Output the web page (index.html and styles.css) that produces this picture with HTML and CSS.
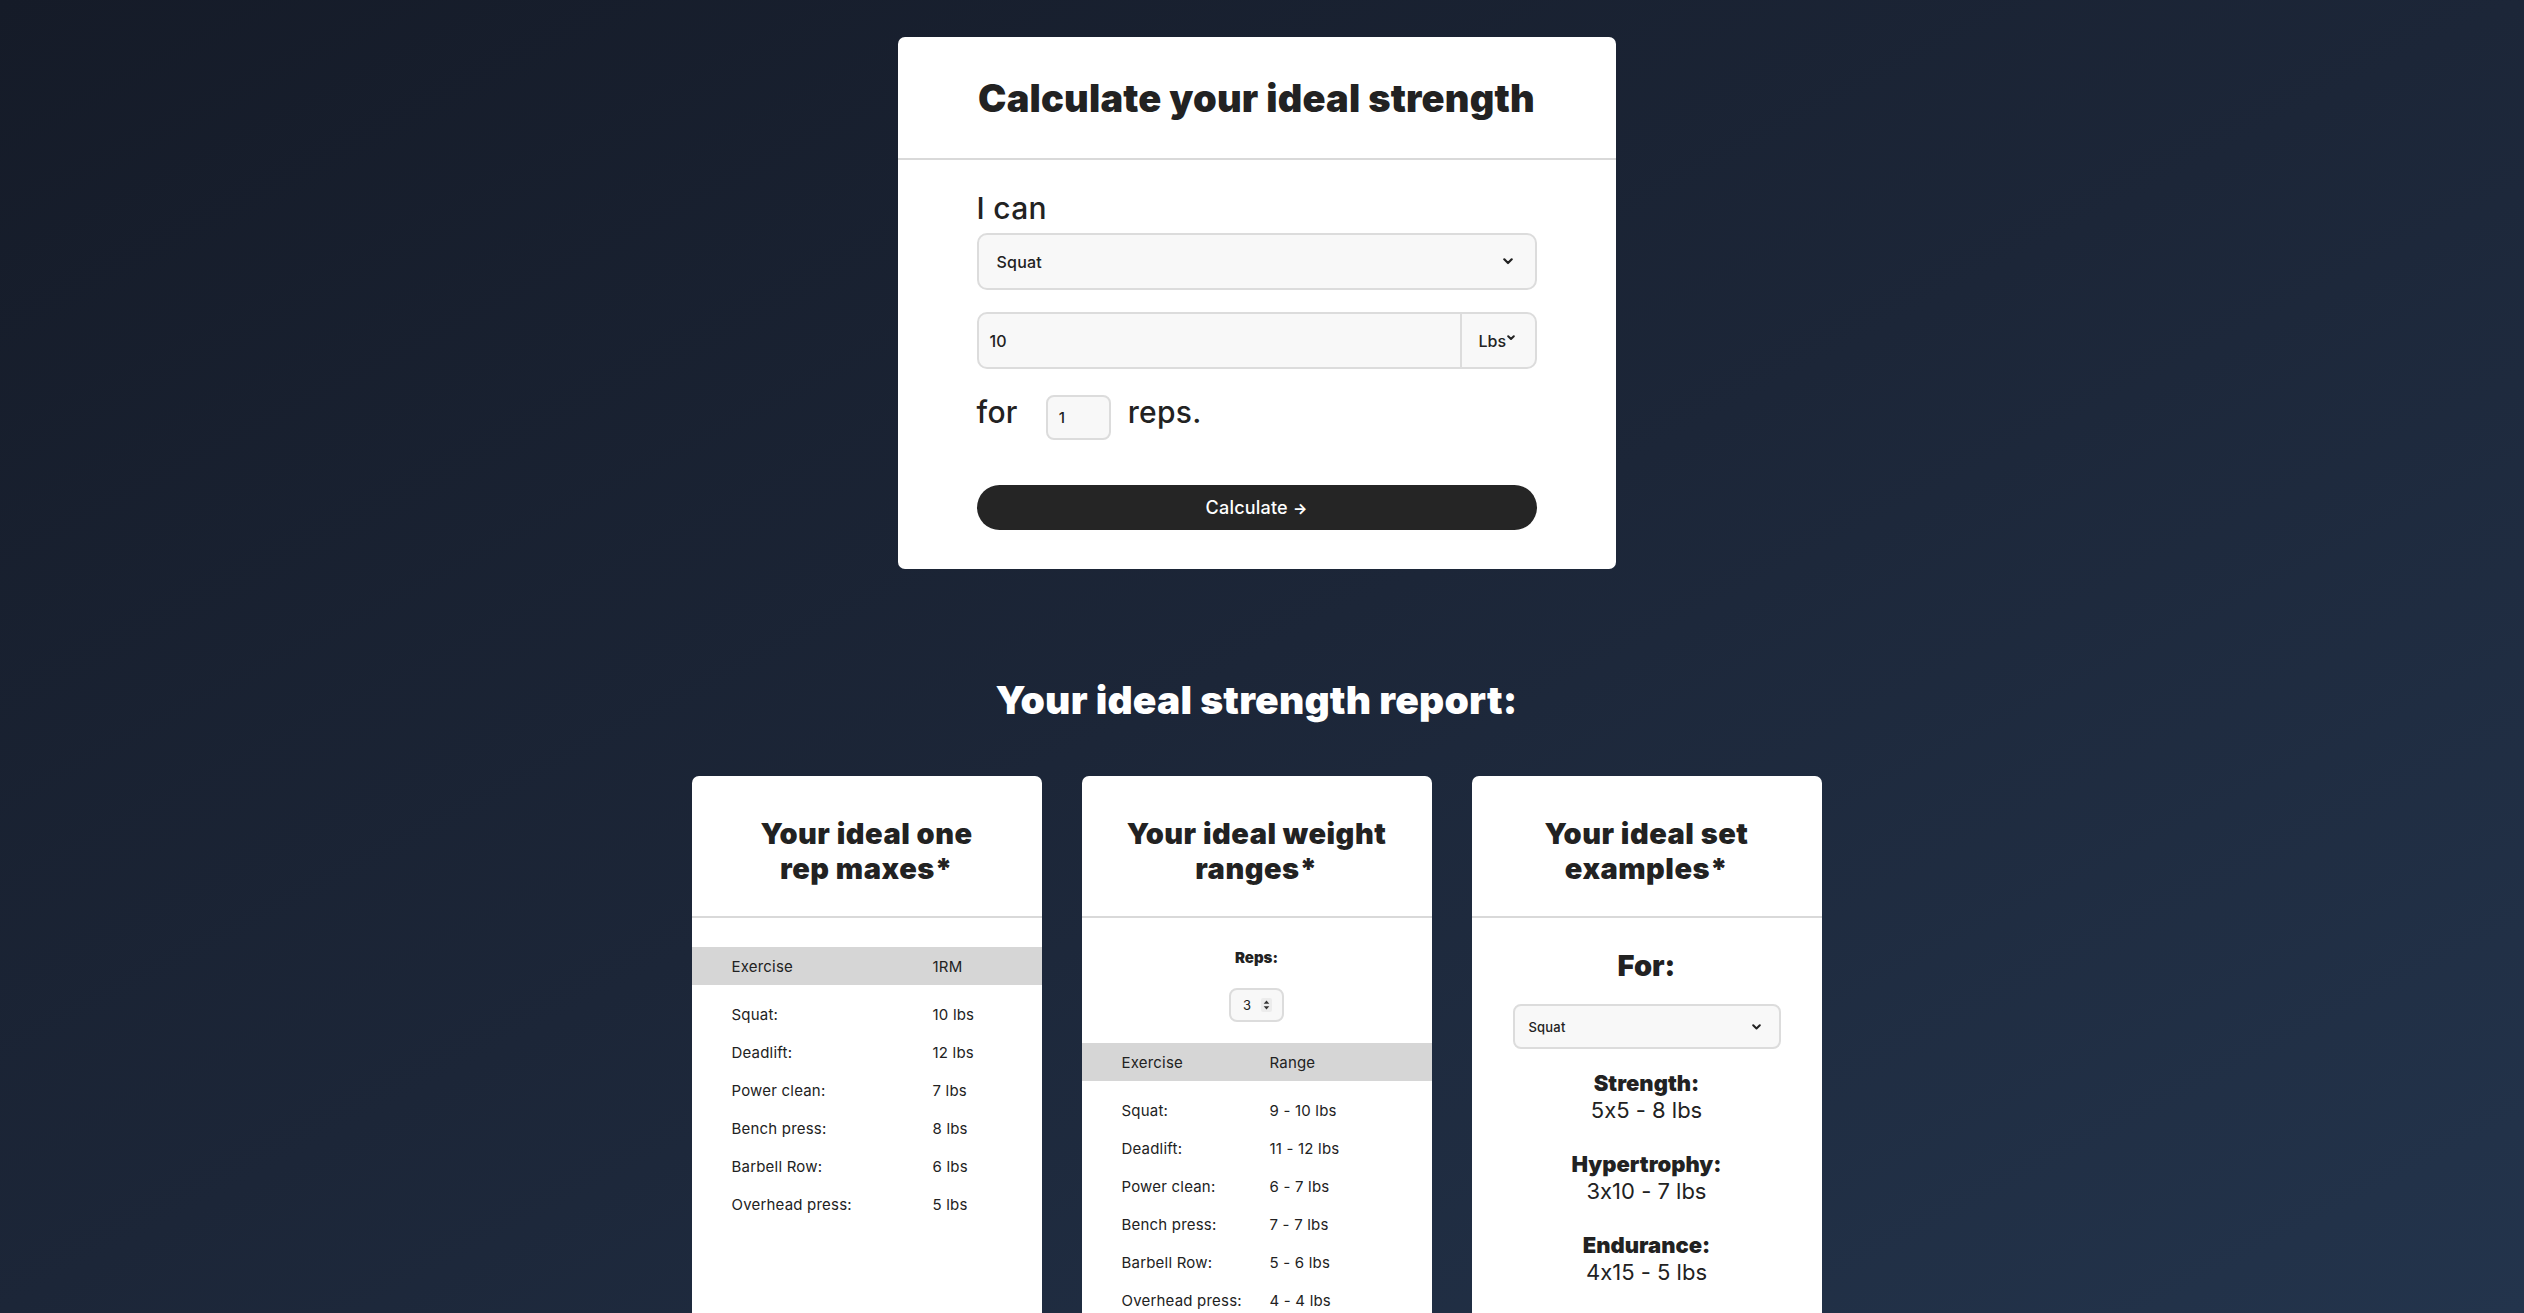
FILE: index.html
```html
<!DOCTYPE html>
<html lang="en">
<head>
<meta charset="utf-8">
<title>Ideal strength calculator</title>
<link rel="stylesheet" href="styles.css">
</head>
<body>
<main class="page">
  <section class="calc-card">
    <header class="calc-head">
      <h1>Calculate your ideal strength</h1>
    </header>
    <form class="calc-body">
      <label class="lead">I can</label>
      <div class="select-box">
        <span>Squat</span>
        <svg class="chev" width="10" height="7" viewBox="0 0 10 7"><path d="M1.3 1.3 5 5l3.7-3.7" fill="none" stroke="#222" stroke-width="2.2" stroke-linecap="round" stroke-linejoin="round"/></svg>
      </div>
      <div class="weight-group">
        <span class="weight-value">10</span>
        <span class="unit">Lbs<svg class="chev-sm" width="8" height="6" viewBox="0 0 8 6"><path d="M1.2 1.2 4 4l2.8-2.8" fill="none" stroke="#222" stroke-width="2" stroke-linecap="round" stroke-linejoin="round"/></svg></span>
      </div>
      <div class="reps-line">
        <span class="reps-word">for</span>
        <span class="reps-box">1</span>
        <span class="reps-word">reps.</span>
      </div>
      <button type="button" class="calc-btn">Calculate <span class="arrow">&#8594;</span></button>
    </form>
  </section>

  <h2 class="report-title">Your ideal strength report:</h2>

  <div class="report-grid">
    <article class="report-card">
      <header class="card-head"><h3>Your ideal one<br>rep maxes*</h3></header>
      <table class="data-table one-rep">
        <thead><tr><th>Exercise</th><th>1RM</th></tr></thead>
        <tbody>
          <tr><td>Squat:</td><td>10 lbs</td></tr>
          <tr><td>Deadlift:</td><td>12 lbs</td></tr>
          <tr><td>Power clean:</td><td>7 lbs</td></tr>
          <tr><td>Bench press:</td><td>8 lbs</td></tr>
          <tr><td>Barbell Row:</td><td>6 lbs</td></tr>
          <tr><td>Overhead press:</td><td>5 lbs</td></tr>
        </tbody>
      </table>
    </article>

    <article class="report-card">
      <header class="card-head"><h3>Your ideal weight<br>ranges*</h3></header>
      <div class="reps-picker">
        <span class="reps-label">Reps:</span>
        <span class="num-input">3
          <svg class="spin" width="11" height="14" viewBox="0 0 11 14"><rect width="11" height="14" rx="2" fill="#ececec"/><path d="M5.5 2.4 8.3 5.8H2.7z M5.5 11.6 8.3 8.2H2.7z" fill="#333"/></svg>
        </span>
      </div>
      <table class="data-table ranges">
        <thead><tr><th>Exercise</th><th>Range</th></tr></thead>
        <tbody>
          <tr><td>Squat:</td><td>9 - 10 lbs</td></tr>
          <tr><td>Deadlift:</td><td>11 - 12 lbs</td></tr>
          <tr><td>Power clean:</td><td>6 - 7 lbs</td></tr>
          <tr><td>Bench press:</td><td>7 - 7 lbs</td></tr>
          <tr><td>Barbell Row:</td><td>5 - 6 lbs</td></tr>
          <tr><td>Overhead press:</td><td>4 - 4 lbs</td></tr>
        </tbody>
      </table>
    </article>

    <article class="report-card">
      <header class="card-head"><h3>Your ideal set<br>examples*</h3></header>
      <div class="sets">
        <p class="for-label">For:</p>
        <div class="select-box small">
          <span>Squat</span>
          <svg class="chev" width="9" height="6" viewBox="0 0 9 6"><path d="M1.2 1.2 4.5 4.5l3.3-3.3" fill="none" stroke="#222" stroke-width="2" stroke-linecap="round" stroke-linejoin="round"/></svg>
        </div>
        <div class="set-item"><strong>Strength:</strong><span>5x5 - 8 lbs</span></div>
        <div class="set-item"><strong>Hypertrophy:</strong><span>3x10 - 7 lbs</span></div>
        <div class="set-item"><strong>Endurance:</strong><span>4x15 - 5 lbs</span></div>
      </div>
    </article>
  </div>
</main>
</body>
</html>
```

FILE: styles.css
```css
* { box-sizing: border-box; }

html {
  min-height: 100%;
  background: linear-gradient(to bottom right, #151b28 0%, #1c2638 50%, #23344c 100%) fixed;
}

body {
  margin: 0;
  font-family: Inter, "Noto Sans", sans-serif;
  font-feature-settings: "calt" 0;
  color: #222;
}

.page {
  display: flex;
  flex-direction: column;
  align-items: center;
  padding: 37px 11px 0 0;
}

/* ---------- calculator card ---------- */
.calc-card {
  width: 718px;
  background: #fff;
  border-radius: 7px;
}

.calc-head {
  padding: 38px 20px 37px;
  border-bottom: 2px solid #d9d9d9;
  text-align: center;
}

.calc-head h1 {
  margin: 0;
  font-size: 38px;
  line-height: 46px;
  font-weight: 900;
  letter-spacing: 0.2px;
  color: #222;
}

.calc-body {
  margin: 0;
  padding: 30px 79px 39px;
  display: flex;
  flex-direction: column;
}

.lead {
  font-size: 30px;
  line-height: 36px;
  font-weight: 500;
  letter-spacing: 0.3px;
}

.select-box {
  margin-top: 7px;
  height: 57px;
  border: 2px solid #dcdcdc;
  border-radius: 10px;
  background: #f8f8f8;
  display: flex;
  align-items: center;
  justify-content: space-between;
  padding: 0 22px 0 18px;
  font-size: 16px;
  font-weight: 500;
  letter-spacing: 0.2px;
}

.chev { display: block; }

.weight-group {
  margin-top: 22px;
  height: 57px;
  border: 2px solid #dcdcdc;
  border-radius: 10px;
  background: #f8f8f8;
  display: flex;
  font-size: 16px;
  font-weight: 500;
}

.weight-value {
  flex: 1;
  display: flex;
  align-items: center;
  padding-left: 11px;
}

.unit {
  width: 75px;
  border-left: 2px solid #dcdcdc;
  display: flex;
  align-items: center;
  padding-left: 17px;
}

.chev-sm { margin: -5px 0 0 1px; }

.reps-line {
  margin-top: 25px;
  display: flex;
  align-items: flex-start;
}

.reps-word {
  font-size: 30px;
  line-height: 36px;
  font-weight: 500;
  letter-spacing: 0.3px;
}

.reps-box {
  margin: 1px 17px 0 28px;
  width: 65px;
  height: 45px;
  border: 2px solid #dcdcdc;
  border-radius: 8px;
  background: #f8f8f8;
  display: flex;
  align-items: center;
  padding-left: 11px;
  font-size: 15px;
  font-weight: 500;
}

.calc-btn {
  margin-top: 45px;
  height: 45px;
  border: 0;
  border-radius: 23px;
  background: #252525;
  color: #fff;
  font-family: Inter, "Noto Sans", sans-serif;
  font-size: 18px;
  font-weight: 500;
  letter-spacing: 0.2px;
  cursor: pointer;
}

.arrow { font-size: 15px; font-weight: 700; }

/* ---------- report ---------- */
.report-title {
  margin: 107px 0 52px;
  font-size: 39px;
  line-height: 48px;
  font-weight: 900;
  letter-spacing: 0.2px;
  color: #fff;
}

.report-grid {
  display: grid;
  grid-template-columns: repeat(3, 350px);
  gap: 40px;
  padding-bottom: 40px;
}

.report-card {
  background: #fff;
  border-radius: 7px;
  padding-bottom: 40px;
}

.card-head {
  padding: 40px 20px 30px;
  border-bottom: 2px solid #d9d9d9;
  text-align: center;
}

.card-head h3 {
  margin: 0;
  font-size: 29px;
  line-height: 35px;
  font-weight: 900;
  letter-spacing: 0.5px;
}

.data-table {
  width: 100%;
  border-collapse: collapse;
  table-layout: fixed;
  font-size: 15px;
  letter-spacing: 0.2px;
}

.data-table th,
.data-table td {
  padding: 0 0 0 40px;
  height: 38px;
  text-align: left;
  font-weight: 400;
  white-space: nowrap;
}

.data-table th { background: #d6d6d6; }

.data-table tbody tr:first-child td {
  padding-top: 10px;
  height: 48px;
}

.one-rep { margin-top: 29px; }
.one-rep th:first-child { width: 201px; }

.ranges { margin-top: 21px; }
.ranges th:first-child { width: 148px; }

.reps-picker {
  display: flex;
  flex-direction: column;
  align-items: center;
  padding-top: 30px;
}

.reps-label {
  font-size: 15px;
  line-height: 20px;
  font-weight: 900;
}

.num-input {
  margin-top: 20px;
  width: 55px;
  height: 34px;
  border: 2px solid #dcdcdc;
  border-radius: 8px;
  background: #f8f8f8;
  display: flex;
  align-items: center;
  justify-content: space-between;
  padding: 0 10px 0 12px;
  font-size: 13px;
}

.spin { display: block; }

.sets {
  display: flex;
  flex-direction: column;
  align-items: center;
  padding-top: 30px;
}

.for-label {
  margin: 0;
  font-size: 29px;
  line-height: 35px;
  font-weight: 900;
}

.select-box.small {
  margin-top: 21px;
  width: 268px;
  height: 45px;
  border-radius: 8px;
  padding: 0 18px 0 14px;
  font-size: 13px;
}

.set-item {
  margin-top: 27px;
  display: flex;
  flex-direction: column;
  align-items: center;
  font-size: 22px;
  line-height: 27px;
}

.sets .select-box + .set-item { margin-top: 21px; }

.set-item strong { font-weight: 900; }
.set-item span { font-weight: 400; }
```
